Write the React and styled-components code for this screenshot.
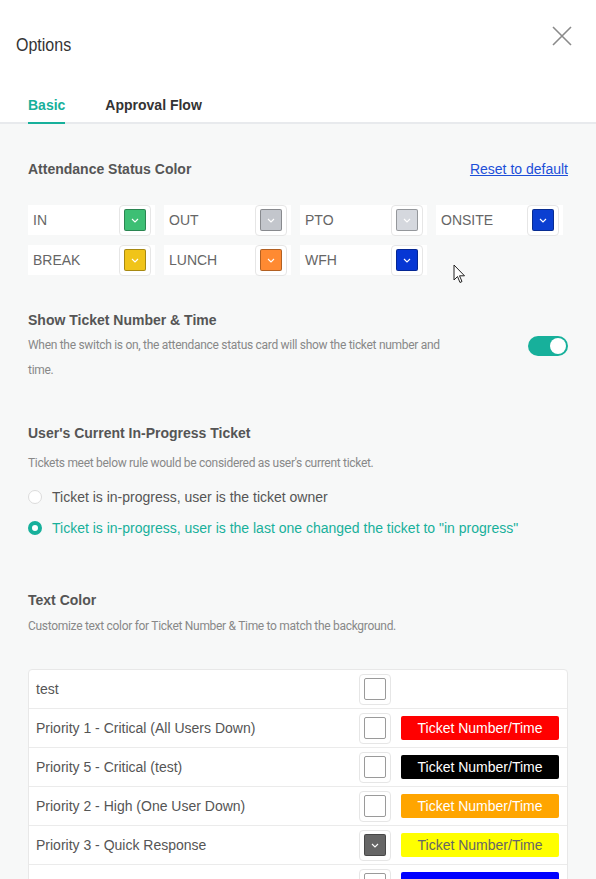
import React from 'react';
import styled, { createGlobalStyle } from 'styled-components';

const GlobalStyle = createGlobalStyle`
  html, body {
    margin: 0;
    padding: 0;
    background: #f7f8f8;
  }
  body {
    font-family: "Liberation Sans", Arial, sans-serif;
  }
`;

const TEAL = '#17b09b';

// Styled Components
const Page = styled.div`
  position: relative;
  width: 596px;
  height: 879px;
  overflow: hidden;
  background: #f7f8f8;
`;

const Header = styled.div`
  background: #fff;
  height: 88px;
  box-sizing: border-box;
  padding: 35px 18px 0 16px;
  display: flex;
  justify-content: space-between;
  align-items: flex-start;
`;

const Title = styled.h1`
  margin: 0;
  font-size: 16px;
  line-height: 20px;
  font-weight: normal;
  color: #333;
  transform: scaleY(1.1);
`;

const CloseButton = styled.button`
  border: none;
  background: none;
  padding: 0;
  margin: -10px 5px 0 0;
  width: 22px;
  height: 22px;
  cursor: pointer;
`;

const TabBar = styled.div`
  background: #fff;
  display: flex;
  gap: 40px;
  padding: 0 28px;
  border-bottom: 2px solid #e8eaed;
`;

const Tab = styled.div`
  height: 34px;
  line-height: 34px;
  font-size: 14px;
  font-weight: bold;
  color: ${p => (p.$active ? TEAL : '#333')};
  border-bottom: 2px solid ${p => (p.$active ? TEAL : 'transparent')};
  margin-bottom: -2px;
  cursor: pointer;
`;

const Body = styled.div`
  padding: 37px 28px 0;
`;

const SectionHead = styled.div`
  display: flex;
  justify-content: space-between;
  align-items: center;
  height: 16px;
  margin-top: ${p => p.$top || 0}px;
`;

const Heading = styled.h3`
  margin: 0;
  font-size: 14px;
  line-height: 16px;
  font-weight: bold;
  color: #555;
`;

const ResetLink = styled.a`
  font-size: 14px;
  color: #1d4fd8;
  text-decoration: underline;
  cursor: pointer;
`;

const ColorGrid = styled.div`
  display: grid;
  grid-template-columns: repeat(4, 127px);
  column-gap: 9px;
  row-gap: 10px;
  margin-top: 28px;
`;

const StatusItem = styled.div`
  height: 30px;
  background: #fff;
  display: flex;
  align-items: center;
  justify-content: space-between;
  padding: 0 4px 0 5px;
`;

const StatusLabel = styled.span`
  font-size: 14px;
  color: #666;
`;

const SwatchBox = styled.div`
  width: 32px;
  height: 31px;
  box-sizing: border-box;
  border: 1px solid #e6e6e6;
  border-radius: 4px;
  background: #fff;
  display: flex;
  align-items: center;
  justify-content: center;
`;

const SwatchFill = styled.div`
  width: 22px;
  height: 22px;
  box-sizing: border-box;
  border: 1px solid ${p => (p.$empty ? '#9a9a9a' : 'rgba(0,0,0,0.3)')};
  border-radius: 2px;
  background: ${p => p.$color};
  display: flex;
  align-items: center;
  justify-content: center;
`;

const Description = styled.p`
  margin: ${p => p.$top || 0}px 0 0;
  font-family: Roboto, "Liberation Sans", sans-serif;
  font-size: 12px;
  letter-spacing: -0.3px;
  line-height: 25px;
  color: #888;
  max-width: ${p => (p.$narrow ? '420px' : 'none')};
`;

const SwitchRow = styled.div`
  display: flex;
  justify-content: space-between;
  align-items: flex-start;
`;

const Toggle = styled.div`
  width: 40px;
  height: 20px;
  border-radius: 10px;
  background: ${TEAL};
  margin-top: 8px;
  display: flex;
  align-items: center;
  justify-content: flex-end;
  padding: 0 2px;
  box-sizing: border-box;
`;

const Knob = styled.div`
  width: 16px;
  height: 16px;
  border-radius: 50%;
  background: #fff;
`;

const RadioList = styled.div`
  display: flex;
  flex-direction: column;
  gap: 15px;
  margin-top: 13px;
`;

const RadioRow = styled.label`
  display: flex;
  align-items: center;
  gap: 10px;
  font-size: 14px;
  line-height: 16px;
  color: ${p => (p.$checked ? TEAL : '#555')};
  cursor: pointer;
`;

const RadioDot = styled.span`
  width: 14px;
  height: 14px;
  box-sizing: border-box;
  border-radius: 50%;
  border: ${p => (p.$checked ? `4px solid ${TEAL}` : '1px solid #dcdcdc')};
  background: #fff;
  flex-shrink: 0;
`;

const Table = styled.div`
  margin-top: 30px;
  background: #fff;
  border: 1px solid #e8e8e8;
  border-radius: 4px;
`;

const TableRow = styled.div`
  display: grid;
  grid-template-columns: 313px 32px 158px;
  column-gap: 10px;
  align-items: center;
  height: 38px;
  padding-left: 7px;
  border-bottom: 1px solid #ebebeb;
`;

const RowLabel = styled.span`
  font-size: 14px;
  color: #555;
`;

const Badge = styled.div`
  height: 24px;
  line-height: 24px;
  border-radius: 2px;
  text-align: center;
  font-size: 14px;
  background: ${p => p.$bg};
  color: ${p => p.$fg};
`;

const Cursor = styled.svg`
  position: absolute;
  left: 453px;
  top: 264px;
`;

const Chevron = ({ color = '#fff' }) => (
  <svg width="8" height="5" viewBox="0 0 8 5">
    <path d="M1 1 L4 4 L7 1" fill="none" stroke={color} strokeWidth="1.1" />
  </svg>
);

const Swatch = ({ color, empty }) => (
  <SwatchBox>
    <SwatchFill $color={color} $empty={empty}>
      {!empty && <Chevron />}
    </SwatchFill>
  </SwatchBox>
);

const statuses = [
  { label: 'IN', color: '#3dbf74' },
  { label: 'OUT', color: '#c3c6cc' },
  { label: 'PTO', color: '#d5d8de' },
  { label: 'ONSITE', color: '#0b3fd1' },
  { label: 'BREAK', color: '#f0c419' },
  { label: 'LUNCH', color: '#ff8a32' },
  { label: 'WFH', color: '#0637d4' },
];

// last row sits under the fold, only its top edge shows
const priorities = [
  { label: 'test', swatch: null, badge: null },
  { label: 'Priority 1 - Critical (All Users Down)', swatch: null, badge: { bg: '#ff0000', fg: '#fff' } },
  { label: 'Priority 5 - Critical (test)', swatch: null, badge: { bg: '#000000', fg: '#fff' } },
  { label: 'Priority 2 - High (One User Down)', swatch: null, badge: { bg: '#ffa500', fg: '#fff' } },
  { label: 'Priority 3 - Quick Response', swatch: '#666666', badge: { bg: '#ffff00', fg: '#666' } },
  { label: '', swatch: null, badge: { bg: '#0000ff', fg: '#fff', text: '' } },
];

const App = () => {
  return (
    <Page>
      <GlobalStyle />
      <Header>
        <Title>Options</Title>
        <CloseButton aria-label="Close">
          <svg width="22" height="22" viewBox="0 0 22 22">
            <path d="M2 2 L20 20 M20 2 L2 20" stroke="#8a8a8a" strokeWidth="1.6" fill="none" />
          </svg>
        </CloseButton>
      </Header>
      <TabBar>
        <Tab $active>Basic</Tab>
        <Tab>Approval Flow</Tab>
      </TabBar>

      <Body>
        <SectionHead>
          <Heading>Attendance Status Color</Heading>
          <ResetLink>Reset to default</ResetLink>
        </SectionHead>
        <ColorGrid>
          {statuses.map(s => (
            <StatusItem key={s.label}>
              <StatusLabel>{s.label}</StatusLabel>
              <Swatch color={s.color} />
            </StatusItem>
          ))}
        </ColorGrid>

        <SectionHead $top={37}>
          <Heading>Show Ticket Number &amp; Time</Heading>
        </SectionHead>
        <SwitchRow>
          <Description $top={5} $narrow>
            When the switch is on, the attendance status card will show the ticket number and time.
          </Description>
          <Toggle>
            <Knob />
          </Toggle>
        </SwitchRow>

        <SectionHead $top={42}>
          <Heading>User's Current In-Progress Ticket</Heading>
        </SectionHead>
        <Description $top={10}>Tickets meet below rule would be considered as user's current ticket.</Description>
        <RadioList>
          <RadioRow>
            <RadioDot />
            Ticket is in-progress, user is the ticket owner
          </RadioRow>
          <RadioRow $checked>
            <RadioDot $checked />
            Ticket is in-progress, user is the last one changed the ticket to "in progress"
          </RadioRow>
        </RadioList>

        <SectionHead $top={56}>
          <Heading>Text Color</Heading>
        </SectionHead>
        <Description $top={6}>Customize text color for Ticket Number &amp; Time to match the background.</Description>

        <Table>
          {priorities.map((p, i) => (
            <TableRow key={i}>
              <RowLabel>{p.label}</RowLabel>
              <Swatch color={p.swatch || '#fff'} empty={!p.swatch} />
              {p.badge ? (
                <Badge $bg={p.badge.bg} $fg={p.badge.fg}>
                  {p.badge.text ?? 'Ticket Number/Time'}
                </Badge>
              ) : (
                <span />
              )}
            </TableRow>
          ))}
        </Table>
      </Body>

      <Cursor width="13" height="20" viewBox="0 0 13 20">
        <path d="M1 1 L1 16 L4.5 12.5 L7 18.5 L9 17.5 L6.5 11.8 L11.5 11.8 Z" fill="#fff" stroke="#222" strokeWidth="1" strokeLinejoin="round" />
      </Cursor>
    </Page>
  );
};

export default App;
